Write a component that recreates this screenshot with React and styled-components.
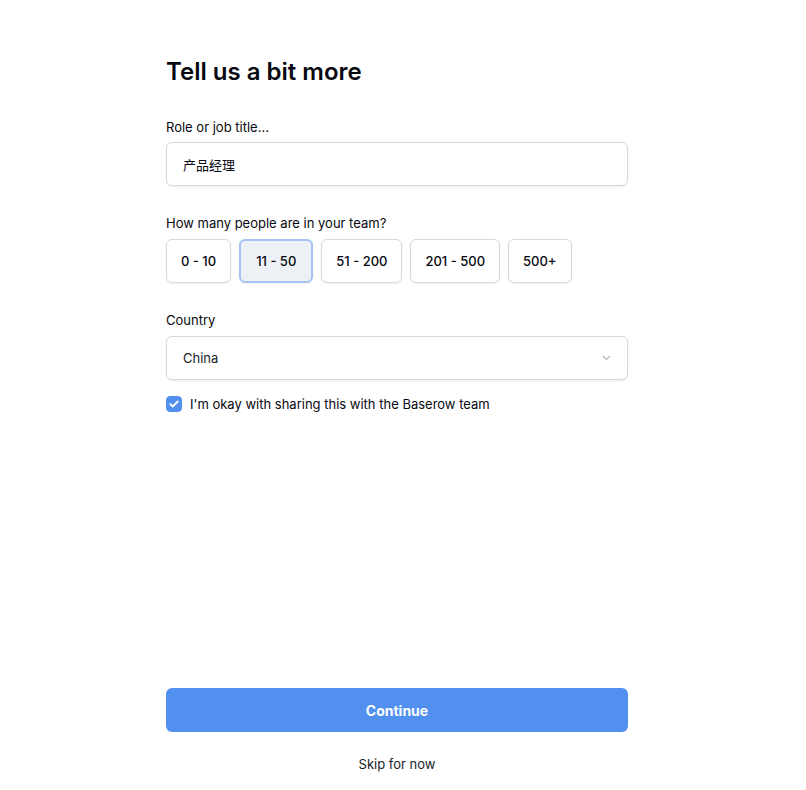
import { useState } from "react"
import styled, { createGlobalStyle } from "styled-components"

const Global = createGlobalStyle`
  body {
    margin: 0;
    padding-right: 12px;
    background: #fff;
    font-family: Inter, "Noto Sans CJK SC", sans-serif;
    color: #070810;
  }
  * { box-sizing: border-box; }
`

const Page = styled.div`
  min-height: 100vh;
  display: flex;
  flex-direction: column;
  width: 462px;
  margin: 0 auto;
  padding: 57px 0 16px;
`

const Titulo = styled.h1`
  margin: 0 0 30px;
  font-size: 24px;
  line-height: 30px;
  font-weight: 600;
`

const Label = styled.div`
  font-size: 13px;
  line-height: 20px;
  margin-bottom: ${p => p.$gap || 5}px;
  font-weight: 400;
`

const Field = styled.div`
  height: 44px;
  border: 1px solid #d7d8d9;
  border-radius: 6px;
  box-shadow: 0 1px 2px rgba(7, 8, 16, 0.08);
  display: flex;
  align-items: center;
  padding: 0 16px;
  font-size: 13px;
  color: #070810;
  margin-bottom: ${p => p.$mb || 27}px;
`

const FieldText = styled.span`
  flex: 1;
  color: ${p => p.$muted ? "#202128" : "#070810"};
`

const Sizes = styled.div`
  display: flex;
  gap: 8px;
  margin-bottom: 27px;
`

const SizeBtn = styled.button`
  height: 44px;
  padding: 0 ${p => p.$on ? 15 : 14}px;
  font-family: inherit;
  font-size: 13px;
  font-weight: 500;
  color: #070810;
  background: ${p => p.$on ? "#edf0f5" : "#fff"};
  border: ${p => p.$on ? "2px solid #a3c3f7" : "1px solid #d7d8d9"};
  border-radius: 6px;
  box-shadow: 0 1px 2px rgba(7, 8, 16, 0.06);
  cursor: pointer;
`

const CheckRow = styled.label`
  display: flex;
  align-items: center;
  gap: 8px;
  font-size: 13px;
  color: #070810;
  cursor: pointer;
`

const Box = styled.span`
  width: 16px;
  height: 16px;
  border-radius: 4px;
  background: ${p => p.$on ? "#5190ef" : "#fff"};
  border: 1px solid ${p => p.$on ? "#5190ef" : "#d7d8d9"};
  display: flex;
  align-items: center;
  justify-content: center;
`

const Bottom = styled.div`
  margin-top: auto;
  display: flex;
  flex-direction: column;
  align-items: center;
`

const Continuar = styled.button`
  width: 100%;
  height: 44px;
  border: none;
  border-radius: 6px;
  background: #5190ef;
  color: #fff;
  font-family: inherit;
  font-size: 14px;
  font-weight: 700;
  cursor: pointer;
  margin-bottom: 22px;
`

const Skip = styled.a`
  font-size: 13px;
  line-height: 20px;
  color: #202128;
  cursor: pointer;
`

const sizes = ["0 - 10", "11 - 50", "51 - 200", "201 - 500", "500+"]

const App = () => {
  const [size, setSize] = useState("11 - 50")
  const [ok, setOk] = useState(true)

  return (
    <>
      <Global />
      <Page>
        <Titulo>Tell us a bit more</Titulo>

        <Label>Role or job title...</Label>
        <Field>
          <FieldText>产品经理</FieldText>
        </Field>

        <Label $gap={6}>How many people are in your team?</Label>
        <Sizes>
          {sizes.map(s => (
            <SizeBtn key={s} $on={s === size} onClick={() => setSize(s)}>{s}</SizeBtn>
          ))}
        </Sizes>

        <Label $gap={6}>Country</Label>
        <Field $mb={16}>
          <FieldText $muted>China</FieldText>
          <svg width="9" height="6" viewBox="0 0 9 6" fill="none">
            <path d="M1 1l3.5 3.5L8 1" stroke="#b5b6ba" strokeWidth="1.1" />
          </svg>
        </Field>

        <CheckRow onClick={() => setOk(!ok)}>
          <Box $on={ok}>
            {ok && (
              <svg width="10" height="8" viewBox="0 0 10 8" fill="none">
                <path d="M1.3 4.2l2.4 2.3L8.7 1.5" stroke="#fff" strokeWidth="1.8" strokeLinecap="round" strokeLinejoin="round" />
              </svg>
            )}
          </Box>
          I'm okay with sharing this with the Baserow team
        </CheckRow>

        <Bottom>
          <Continuar>Continue</Continuar>
          <Skip>Skip for now</Skip>
        </Bottom>
      </Page>
    </>
  )
}

export default App
